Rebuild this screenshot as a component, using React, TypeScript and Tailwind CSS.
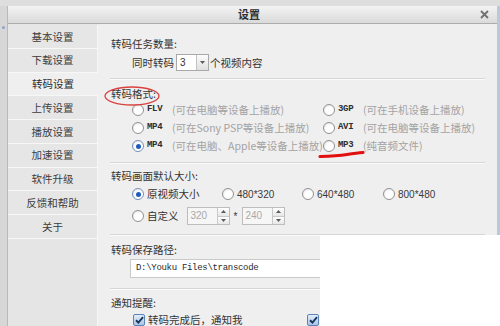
import type { ReactNode } from "react"

const menu = ["基本设置", "下载设置", "转码设置", "上传设置", "播放设置", "加速设置", "软件升级", "反馈和帮助", "关于"]

function Radio({ checked = false }: { checked?: boolean }) {
  return (
    <span
      className={`flex h-[12px] w-[12px] shrink-0 items-center justify-center rounded-full border bg-[radial-gradient(circle_at_60%_65%,#ffffff_45%,#d9d9d9)] ${
        checked ? "border-[#7391b8]" : "border-[#929292]"
      }`}
    >
      {checked && <span className="h-[5px] w-[5px] rounded-full bg-[#1f5cba]" />}
    </span>
  )
}

function Check() {
  return (
    <span className="flex h-[12px] w-[12px] shrink-0 items-center justify-center rounded-[2px] border border-[#5a84b6] bg-gradient-to-b from-[#e4eef9] to-[#a9c4e6]">
      <svg width="9" height="8" viewBox="0 0 9 8">
        <path d="M1 4.2 L3.4 6.5 L8 1.2" fill="none" stroke="#17365f" strokeWidth="1.9" />
      </svg>
    </span>
  )
}

function Tri({ up = false }: { up?: boolean }) {
  return (
    <svg width="5" height="3" viewBox="0 0 5 3">
      <path d={up ? "M0 3 L2.5 0 L5 3 Z" : "M0 0 L5 0 L2.5 3 Z"} fill="#5a5a5a" />
    </svg>
  )
}

function SpinInput({ value }: { value: string }) {
  return (
    <div className="flex h-[18px] border border-[#bdbdbd] bg-[#f6f6f6]">
      <span className="w-[29px] pl-[3px] font-['Liberation_Sans',sans-serif] text-[10px] leading-[16px] text-[#a9a9a9]">
        {value}
      </span>
      <div className="flex w-[12px] flex-col border-l border-[#c9c9c9]">
        <span className="flex flex-1 items-center justify-center border-b border-[#c9c9c9] bg-gradient-to-b from-white to-[#e6e6e6]">
          <Tri up />
        </span>
        <span className="flex flex-1 items-center justify-center bg-gradient-to-b from-white to-[#e6e6e6]">
          <Tri />
        </span>
      </div>
    </div>
  )
}

function Sep({ className }: { className: string }) {
  return <div className={`-ml-[1px] h-[2px] border-t border-b border-t-[#d7d6d6] border-b-[#fbfbfb] ${className}`} />
}

function Format({ name, hint, checked }: { name: string; hint: ReactNode; checked?: boolean }) {
  return (
    <div className="flex items-center whitespace-nowrap">
      <Radio checked={checked} />
      <span className="ml-[3px] w-[25px] font-['Liberation_Mono',monospace] text-[9px] font-bold tracking-[-0.3px] text-[#2d2d2d]">
        {name}
      </span>
      <span className="text-[#a3a3a3]">{hint}</span>
    </div>
  )
}

function Size({ label, checked, className }: { label: string; checked?: boolean; className: string }) {
  return (
    <div className={`flex items-center ${className}`}>
      <Radio checked={checked} />
      <span className="ml-[3px] font-['Liberation_Sans',sans-serif] text-[10px] text-[#3a3a3a]">{label}</span>
    </div>
  )
}

export default function App() {
  return (
    <div className="relative flex h-[326px] w-[500px] flex-col overflow-hidden bg-[#dcdcdc] font-['Noto_Sans_CJK_SC',sans-serif] text-[10.5px] text-[#333]">
      <div className="h-[6px] shrink-0 bg-[#dedede]" />
      <div className="flex flex-1">
        <div className="w-[7px] shrink-0 bg-[#d7d7d7]">
          <div className="mt-[20px] ml-[2px] h-[3px] w-[3px] rounded-full bg-[#8aa7cc]" />
        </div>
        <div className="flex flex-1 flex-col border-l border-[#b9b9b9]">
          {/* title bar */}
          <div className="flex h-[18px] shrink-0 items-center border-b border-[#acacac] bg-gradient-to-b from-[#f3f3f3] to-[#dadada]">
            <div className="flex-1 pl-[10px] text-center text-[11px] font-bold text-[#2f2f2f]">设置</div>
            <svg className="mr-[8px]" width="9" height="9" viewBox="0 0 9 9">
              <path d="M1 1 L8 8 M8 1 L1 8" stroke="#6f6f6f" strokeWidth="1.8" />
            </svg>
          </div>

          <div className="flex flex-1">
            {/* side menu */}
            <div className="flex w-[90px] shrink-0 flex-col bg-[#e5e5e5] pt-[1px]">
              {menu.map((item, i) => (
                <div
                  key={item}
                  className={
                    i === 2
                      ? "flex h-[23.75px] items-center justify-center border-b border-[#f7f7f7] bg-[#f0efef] text-[#2c2c2c]"
                      : "flex h-[23.75px] items-center justify-center border-r border-b border-[#f7f7f7] bg-[#e6e6e6] text-[#3c3c3c]"
                  }
                >
                  {item}
                </div>
              ))}
              <div className="flex-1 border-r border-[#f7f7f7]" />
            </div>

            {/* content */}
            <div className="flex-1 bg-[#f0efef] pr-[12px] pl-[13px]">
              <div className="mt-[13px] h-[14px] leading-[14px]">转码任务数量:</div>
              <div className="mt-[3px] flex h-[17px] items-center pl-[21px]">
                <span>同时转码</span>
                <div className="ml-[2px] flex h-[17px] w-[33px] border border-[#a9a9a9] bg-white">
                  <span className="flex-1 pl-[3px] font-['Liberation_Sans',sans-serif] text-[10px] leading-[15px]">3</span>
                  <span className="flex w-[12px] items-center justify-center border-l border-[#c2c2c2] bg-gradient-to-b from-[#fbfbfb] to-[#e0e0e0]">
                    <Tri />
                  </span>
                </div>
                <span className="ml-[1px]">个视频内容</span>
              </div>

              <Sep className="mt-[7px]" />

              <div className="mt-[7px] h-[14px] leading-[14px]">转码格式:</div>
              <div className="grid grid-cols-[191px_1fr] grid-rows-[18px_18px_18px] items-center pl-[21px]">
                <Format name="FLV" hint="(可在电脑等设备上播放)" />
                <Format name="3GP" hint="(可在手机设备上播放)" />
                <Format name="MP4" hint="(可在Sony PSP等设备上播放)" />
                <Format name="AVI" hint="(可在电脑等设备上播放)" />
                <Format name="MP4" hint="(可在电脑、Apple等设备上播放)" checked />
                <Format name="MP3" hint="(纯音频文件)" />
              </div>

              <Sep className="mt-[7px]" />

              <div className="mt-[5px] h-[14px] leading-[14px]">转码画面默认大小:</div>
              <div className="mt-[2px] flex h-[18px] items-center pl-[21px]">
                <div className="flex w-[90px] items-center">
                  <Radio checked />
                  <span className="ml-[3px]">原视频大小</span>
                </div>
                <Size label="480*320" className="w-[80px]" />
                <Size label="640*480" className="w-[81px]" />
                <Size label="800*480" className="w-[80px]" />
              </div>
              <div className="mt-[4px] flex h-[18px] items-center pl-[21px]">
                <Radio />
                <span className="ml-[3px]">自定义</span>
                <div className="ml-[8px]">
                  <SpinInput value="320" />
                </div>
                <span className="w-[12px] text-center font-['Liberation_Sans',sans-serif] text-[10px]">*</span>
                <SpinInput value="240" />
              </div>

              <Sep className="mt-[9px]" />

              <div className="mt-[7px] h-[14px] leading-[14px]">转码保存路径:</div>
              <div className="mt-[2px] ml-[19px] flex h-[19px] items-center border border-[#cacaca] bg-white pl-[5px] font-['Liberation_Mono',monospace] text-[9px] tracking-[-0.3px] text-[#2a2a2a]">
                {"D:\\Youku Files\\transcode"}
              </div>

              <Sep className="mt-[10px]" />

              <div className="mt-[6px] h-[14px] leading-[14px]">通知提醒:</div>
              <div className="mt-[3px] flex h-[13px] items-center pl-[22px]">
                <div className="flex w-[174px] items-center">
                  <Check />
                  <span className="ml-[3px]">转码完成后，通知我</span>
                </div>
                <Check />
              </div>
            </div>
          </div>
        </div>
        <div className="w-[3px] shrink-0 bg-[#bac8da]" />
      </div>

      {/* annotations */}
      <svg className="absolute top-[85px] left-[103px]" width="60" height="22" viewBox="0 0 60 22">
        <ellipse cx="29" cy="11" rx="27" ry="9" fill="none" stroke="#d8413f" strokeWidth="1.3" />
      </svg>
      <svg className="absolute top-[148px] left-[317px]" width="50" height="12" viewBox="0 0 50 12">
        <path d="M3 8.5 Q 20 8 30 6.5 T 46 4.5" fill="none" stroke="#e10f0f" strokeWidth="3.2" strokeLinecap="round" />
      </svg>

      {/* blank area lying over the dialog */}
      <div className="absolute top-[235px] right-0 bottom-0 left-[320px] bg-white" />
    </div>
  )
}
